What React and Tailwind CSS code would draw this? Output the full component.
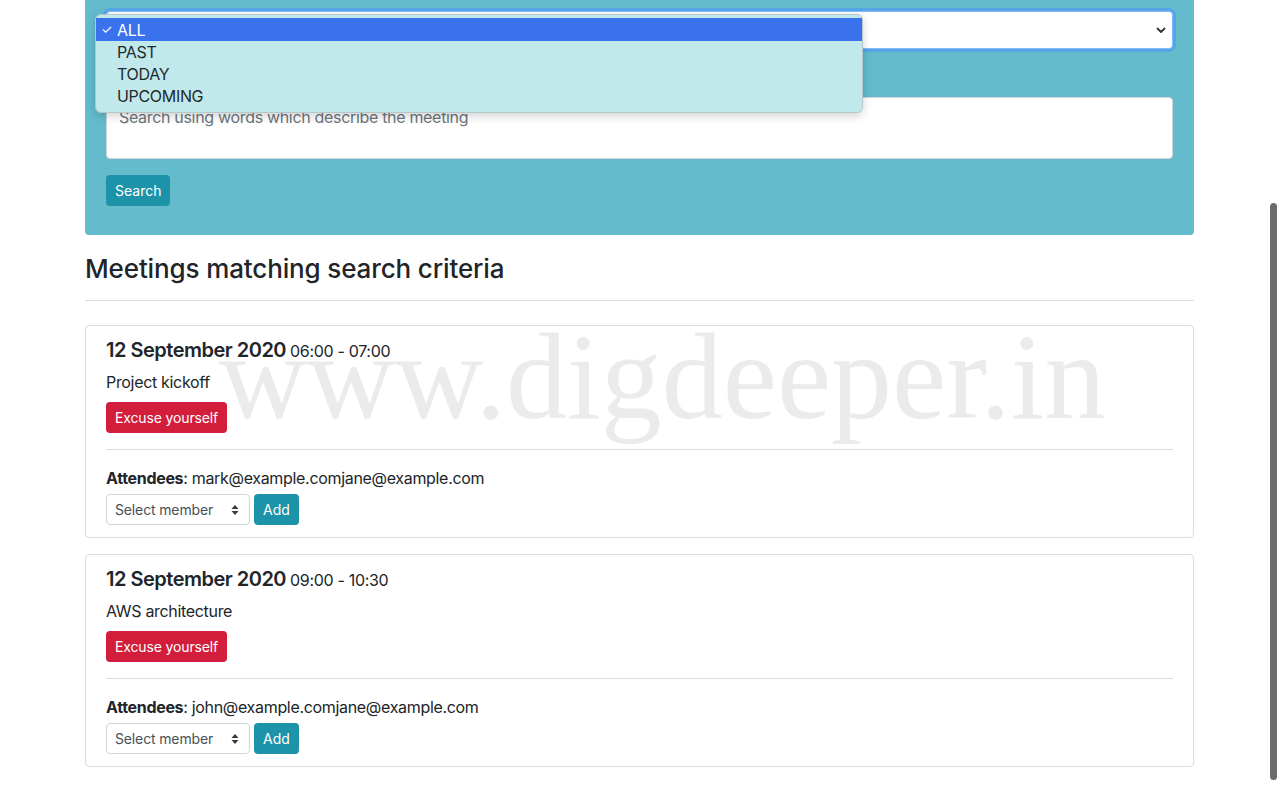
import React from "react";

// -----------------------------
// Small inline pieces
// -----------------------------
const Chevron = () => (
  <svg width="12" height="12" viewBox="0 0 12 12" className="text-[#333]">
    <path d="M2.5 4.5 L6 8 L9.5 4.5" fill="none" stroke="currentColor" strokeWidth="1.8" strokeLinecap="round" strokeLinejoin="round" />
  </svg>
);

const UpDown = () => (
  <svg width="8" height="12" viewBox="0 0 8 12" className="text-[#343a40]">
    <path d="M4 1 L7.5 5 H0.5 Z M4 11 L0.5 7 H7.5 Z" fill="currentColor" />
  </svg>
);

const meetings = [
  {
    id: 1,
    date: "12 September 2020",
    time: "06:00 - 07:00",
    name: "Project kickoff",
    attendees: "mark@example.comjane@example.com",
  },
  {
    id: 2,
    date: "12 September 2020",
    time: "09:00 - 10:30",
    name: "AWS architecture",
    attendees: "john@example.comjane@example.com",
  },
];

const MeetingCard = ({ m }) => (
  <div className="relative z-10 border border-[#dcdcdc] rounded-[4px] px-5 pt-3 pb-[12px] mb-4">
    <div className="flex items-baseline gap-1 h-6 leading-6">
      <span className="text-[20px] font-semibold text-[#212529] tracking-[-0.025em]">{m.date}</span>
      <span className="text-[16px] text-[#212529]">{m.time}</span>
    </div>
    <div className="mt-2 h-6 leading-6 text-[16px] text-[#212529]">{m.name}</div>
    <button className="mt-2 h-[31px] px-[9px] rounded-[4px] bg-[#d21d3b] text-white text-[14px] tracking-[-0.01em]">
      Excuse yourself
    </button>
    <div className="mt-4 border-t border-[#dcdcdc]" />
    <div className="mt-4 h-6 leading-6 text-[16px] text-[#212529]">
      <span className="font-bold">Attendees</span>: {m.attendees}
    </div>
    <div className="mt-1 flex gap-1">
      <div className="w-[144px] h-[31px] border border-[#ced4da] rounded-[4px] flex items-center justify-between pl-2 pr-[10px] text-[14px] text-[#495057] bg-white tracking-[-0.01em]">
        <span>Select member</span>
        <UpDown />
      </div>
      <button className="h-[31px] px-[9px] rounded-[4px] bg-[#1c93a9] text-white text-[14px] tracking-normal">Add</button>
    </div>
  </div>
);

export default function App() {
  return (
    <div
      className="relative min-h-[799px] bg-white overflow-hidden tracking-[-0.02em]"
      style={{ fontFamily: "Inter, 'Liberation Sans', sans-serif" }}
    >
      {/* Watermark */}
      <div
        className="absolute left-[219px] top-[316px] text-[122px] leading-none tracking-normal text-[#ebebeb] pointer-events-none select-none z-0 whitespace-nowrap"
        style={{ fontFamily: "'Liberation Serif', serif" }}
      >
        www.digdeeper.in
      </div>

      <div className="w-[1109px] mx-auto">
        {/* Search panel */}
        <div className="bg-[#63bbcc] rounded-b-[4px] px-[21px] pt-[11px] pb-[29px]">
          <div className="h-[38px] bg-white rounded-[4px] border border-[#80bdff] ring-[3px] ring-[#57a5e6] flex items-center justify-end pr-[5px]">
            <Chevron />
          </div>
          <div className="h-[48px]" />
          <div className="h-[62px] bg-white rounded-[4px] border border-[#ced4da] px-3 pt-[7px] text-[16px] leading-6 text-[#6c757d]">
            Search using words which describe the meeting
          </div>
          <button className="mt-4 h-[31px] px-[9px] rounded-[4px] bg-[#1c93a9] text-white text-[14px] tracking-normal">Search</button>
        </div>

        {/* Results heading */}
        <h3 className="mt-[17px] h-[34px] leading-[34px] text-[26px] font-medium text-[#212529] tracking-[-0.005em]">
          Meetings matching search criteria
        </h3>
        <div className="mt-[14px] border-t border-[#dcdcdc]" />

        <div className="mt-6">
          {meetings.map((m) => (
            <MeetingCard key={m.id} m={m} />
          ))}
        </div>
      </div>

      {/* Native select popup */}
      <div className="absolute left-[95px] top-[14px] w-[768px] rounded-[6px] border border-[#b5c7c9] bg-[#c1e8eb] shadow-[0_3px_10px_rgba(0,0,0,0.18)] pt-[3px] pb-[5px] text-[16px] text-[#1d2b2d] z-20">
        <div className="h-[23px] bg-[#3a72ee] text-white flex items-center">
          <span className="w-[21px] pl-[5px] text-[13px]">✓</span>
          <span>ALL</span>
        </div>
        <div className="h-[22px] flex items-center pl-[21px]">PAST</div>
        <div className="h-[22px] flex items-center pl-[21px]">TODAY</div>
        <div className="h-[22px] flex items-center pl-[21px]">UPCOMING</div>
      </div>

      {/* Overlay scrollbar */}
      <div className="absolute left-[1270px] top-[203px] w-[7px] h-[577px] rounded-full bg-[#6b6b6b] z-20" />
    </div>
  );
}
